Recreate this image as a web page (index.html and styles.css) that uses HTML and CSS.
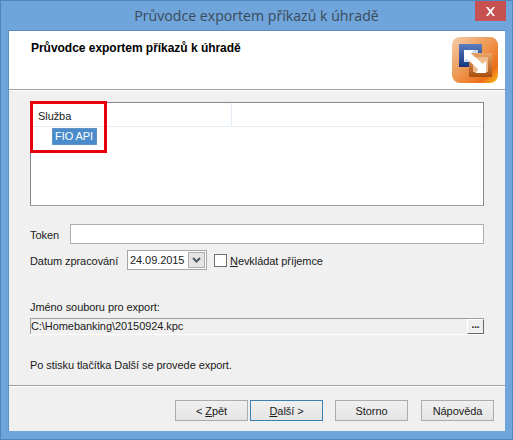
FILE: index.html
```html
<!DOCTYPE html>
<html lang="cs">
<head>
<meta charset="utf-8">
<title>Průvodce exportem příkazů k úhradě</title>
<link rel="stylesheet" href="styles.css">
</head>
<body>
<div class="window">
  <div class="titlebar">
    <div class="title">Průvodce exportem příkazů k úhradě</div>
    <div class="close">
      <svg width="11" height="9" viewBox="0 0 11 9"><path d="M1 0h2l2.500 3L8 0h2L6.700 4.500 10 9H8L5.500 6 3 9H1l3.300-4.500z" fill="#fff"/></svg>
    </div>
  </div>
  <div class="client">
    <header class="head">
      <h1 class="head-title">Průvodce exportem příkazů k úhradě</h1>
      <svg class="logo" width="46" height="46" viewBox="0 0 46 46">
        <defs>
          <linearGradient id="bg" x1="0" y1="0" x2="1" y2="1">
            <stop offset="0" stop-color="#f5cdaa"/>
            <stop offset=".45" stop-color="#ee9a55"/>
            <stop offset=".8" stop-color="#ee6f18"/>
            <stop offset="1" stop-color="#f6c21c"/>
          </linearGradient>
          <linearGradient id="blue" x1="0" y1="0" x2="0" y2="1">
            <stop offset="0" stop-color="#5c7fc0"/>
            <stop offset="1" stop-color="#17337f"/>
          </linearGradient>
          <linearGradient id="brown" x1="0" y1="0" x2="0" y2="1">
            <stop offset="0" stop-color="#e8a468"/>
            <stop offset="1" stop-color="#a8500f"/>
          </linearGradient>
        </defs>
        <rect width="46" height="46" rx="8" fill="url(#bg)"/>
        <rect x="7" y="7" width="23" height="23" fill="url(#blue)"/>
        <rect x="12" y="13" width="14" height="12" fill="#c9d6ee"/>
        <rect x="17" y="16" width="23" height="24" fill="url(#brown)"/>
        <rect x="21" y="20" width="15" height="15" fill="#eeb98c"/>
        <path d="M12 13h10l-3 3.500L31 27l3-3.500V36H23l3.500-3.500L14.500 21.500 12 24z" fill="#fff"/>
      </svg>
    </header>
    <main class="body">
      <div class="list">
        <div class="list-head">
          <div class="col col-first">Služba</div>
          <div class="col"></div>
        </div>
        <div class="list-row"><span class="selected">FIO API</span></div>
      </div>
      <div class="token-row">
        <label class="token-label">Token</label>
        <div class="input token-input"></div>
      </div>
      <div class="date-row">
        <label class="date-label">Datum zpracování</label>
        <div class="date-box">
          <span class="date-value">24.09.2015</span>
          <span class="drop">
            <svg width="9" height="6" viewBox="0 0 9 6"><path d="M1 1l3.500 3.500L8 1" fill="none" stroke="#4d5a66" stroke-width="2"/></svg>
          </span>
        </div>
        <span class="check"></span>
        <span class="check-label"><u>N</u>evkládat příjemce</span>
      </div>
      <div class="file-label">Jméno souboru pro export:</div>
      <div class="file-row">
        <div class="file-path">C:\Homebanking\20150924.kpc</div>
        <div class="browse">...</div>
      </div>
      <p class="hint">Po stisku tlačítka Další se provede export.</p>
    </main>
    <footer class="foot">
      <button class="btn">&lt; <u>Z</u>pět</button>
      <button class="btn btn-default"><u>D</u>alší &gt;</button>
      <button class="btn btn-cancel">Storno</button>
      <button class="btn btn-help">Nápověda</button>
    </footer>
  </div>
  <div class="annotation"></div>
</div>
</body>
</html>
```
FILE: styles.css
```css
* { box-sizing: border-box; }
html, body { margin: 0; padding: 0; }
body {
  width: 513px;
  height: 440px;
  overflow: hidden;
  font-family: "Liberation Sans", Arial, sans-serif;
  font-size: 11px;
  letter-spacing: -0.07px;
  color: #1a1a1a;
  white-space: nowrap;
}
.window {
  position: relative;
  width: 513px;
  height: 440px;
  background: #6fa5da;
  border: 1px solid #4f86c0;
  padding: 0 7px 8px 7px;
  display: flex;
  flex-direction: column;
}
.titlebar {
  height: 29px;
  flex: none;
  position: relative;
  display: flex;
  justify-content: center;
  align-items: center;
}
.title {
  font-family: "Open Sans", sans-serif;
  font-size: 14.15px;
  letter-spacing: 0;
  color: #3b4a5a;
}
.close {
  position: absolute;
  right: -1px;
  top: 0;
  width: 31px;
  height: 20px;
  background: #c75050;
  display: flex;
  align-items: center;
  justify-content: center;
}
.client {
  flex: 1;
  background: #f0f0f0;
  display: flex;
  flex-direction: column;
  border: 1px solid #5d8fc4;
  border-width: 1px 0 0 1px;
}
.head {
  height: 59px;
  flex: none;
  background: #fff;
  border-bottom: 1px solid #a0a0a0;
  display: flex;
  justify-content: space-between;
  align-items: flex-start;
  padding: 6px 7px 0 22px;
}
.head-title {
  margin: 4px 0 0;
  font-size: 12px;
  font-weight: 700;
  letter-spacing: -0.03px;
  color: #000;
}
.logo { flex: none; }
.body {
  flex: 1;
  padding: 11px 21px 0 21px;
  display: flex;
  flex-direction: column;
  border-top: 1px solid #fff;
}
.list {
  height: 104px;
  flex: none;
  background: #fff;
  border: 1px solid #828790;
  border-bottom-color: #a0a0a0;
}
.list-head {
  height: 24px;
  display: flex;
  border-bottom: 1px solid #e5eef7;
}
.col {
  flex: 1;
  padding: 7px 0 0 7px;
  color: #1a1a1a;
}
.col-first {
  flex: none;
  width: 201px;
  border-right: 1px solid #e5eef7;
}
.list-row { padding: 1px 0 0 21px; }
.selected {
  display: inline-block;
  height: 17px;
  width: 45px;
  padding: 2px 0 0 3px;
  background: #4a8ccb;
  color: #fff;
  outline: 1px dotted #7f9dbb;
  outline-offset: -1px;
}
.token-row {
  margin-top: 18px;
  height: 20px;
  display: flex;
  align-items: center;
}
.token-label { width: 40px; flex: none; padding-top: 2px; }
.input {
  flex: 1;
  height: 20px;
  background: #fff;
  border: 1px solid #abadb3;
}
.date-row {
  margin-top: 6px;
  height: 20px;
  display: flex;
  align-items: center;
}
.date-label { width: 97px; flex: none; padding-top: 2px; }
.date-box {
  width: 80px;
  height: 20px;
  background: #fff;
  border: 1px solid #a5a5a5;
  display: flex;
  justify-content: space-between;
  padding: 1px 1px 1px 2px;
}
.date-value { line-height: 17px; }
.drop {
  width: 17px;
  background: #e4e4e4;
  border: 1px solid #acacac;
  display: flex;
  align-items: center;
  justify-content: center;
}
.check {
  width: 13px;
  height: 13px;
  margin-left: 7px;
  background: #fff;
  border: 1px solid #707070;
}
.check-label { margin-left: 3px; padding-top: 2px; }
.file-label {
  margin-top: 30px;
  height: 15px;
  line-height: 15px;
}
.file-row {
  margin-top: 3px;
  height: 16px;
  display: flex;
  background: #f0f0f0;
  border: solid #a0a0a0;
  border-width: 1px 0 0 1px;
  box-shadow: 0 1px 0 #fff;
}
.file-path {
  flex: 1;
  line-height: 15px;
}
.browse {
  width: 17px;
  background: #f0f0f0;
  border: 1px solid #fff;
  border-right-color: #696969;
  border-bottom-color: #696969;
  font-weight: 700;
  font-size: 10px;
  line-height: 9px;
  text-align: center;
}
.hint { margin: 24px 0 0; line-height: 15px; }
.foot {
  height: 46px;
  flex: none;
  border-top: 1px solid #a0a0a0;
  box-shadow: inset 0 1px 0 #fff;
  display: flex;
  padding: 14px 11px 0 0;
  justify-content: flex-end;
  gap: 2px;
}
.btn {
  width: 73px;
  height: 21px;
  padding: 0;
  font: inherit;
  letter-spacing: inherit;
  color: #1a1a1a;
  background: linear-gradient(#f0f0f0, #e5e5e5);
  border: 1px solid #acacac;
}
.btn-default { border-color: #3c7fb1; }
.btn-cancel { margin-left: 10px; }
.btn-help { margin-left: 11px; }
.annotation {
  position: absolute;
  left: 29px;
  top: 100px;
  width: 77px;
  height: 52px;
  border: 3px solid #e8000d;
}
```
